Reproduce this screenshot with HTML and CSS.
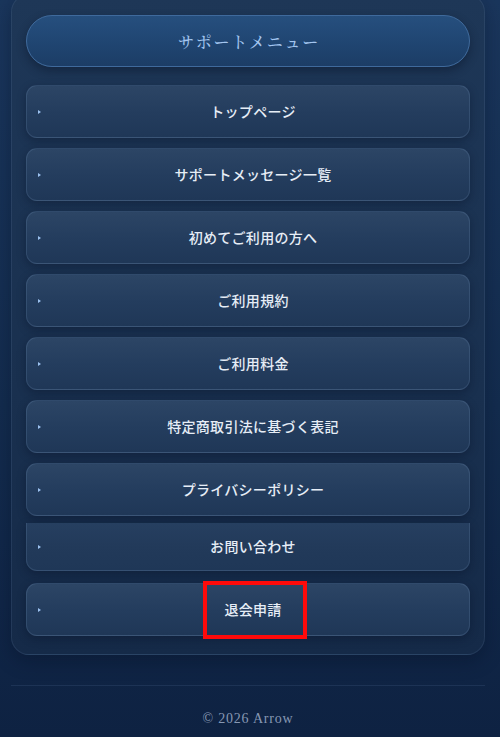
FILE: index.html
```html
<!DOCTYPE html>
<html lang="ja">
<head>
<meta charset="utf-8">
<title>サポートメニュー</title>
<link rel="stylesheet" href="styles.css">
</head>
<body>
<div class="page">
  <section class="card">
    <div class="pill">サポートメニュー</div>
    <nav class="menu">
      <a class="item" href="#"><span class="bullet"></span><span class="label">トップページ</span></a>
      <a class="item" href="#"><span class="bullet"></span><span class="label">サポートメッセージ一覧</span></a>
      <a class="item" href="#"><span class="bullet"></span><span class="label">初めてご利用の方へ</span></a>
      <a class="item" href="#"><span class="bullet"></span><span class="label">ご利用規約</span></a>
      <a class="item" href="#"><span class="bullet"></span><span class="label">ご利用料金</span></a>
      <a class="item" href="#"><span class="bullet"></span><span class="label">特定商取引法に基づく表記</span></a>
      <a class="item" href="#"><span class="bullet"></span><span class="label">プライバシーポリシー</span></a>
      <a class="item item-cut" href="#"><span class="bullet"></span><span class="label">お問い合わせ</span></a>
      <a class="item item-last" href="#"><span class="bullet"></span><span class="label">退会申請</span><span class="highlight"></span></a>
    </nav>
  </section>
  <footer class="footer">
    <div class="divider"></div>
    <p class="copy">© 2026 Arrow</p>
  </footer>
</div>
</body>
</html>
```
FILE: styles.css
```css
html, body {
  margin: 0;
  padding: 0;
}
body {
  background: linear-gradient(180deg, #1a365c 0%, #132c4e 55%, #0e2242 100%);
  min-height: 737px;
  font-family: "Noto Sans CJK JP", "Noto Sans", sans-serif;
  overflow: hidden;
}
.page {
  padding: 0 15px 0 11px;
  height: 737px;
  box-sizing: border-box;
}
.card {
  margin-top: -6px;
  padding: 20px 14px 18px;
  border-radius: 18px;
  background: linear-gradient(180deg, #1e3757 0%, #19304f 60%, #152a48 100%);
  border: 1px solid rgba(120, 150, 190, 0.14);
  box-shadow: 0 6px 18px rgba(5, 15, 35, 0.35);
}
.pill {
  height: 50px;
  border-radius: 26px;
  display: flex;
  align-items: center;
  justify-content: center;
  background: linear-gradient(180deg, #264f7e 0%, #1f4470 60%, #1c3d66 100%);
  border: 1px solid #3f6a9c;
  box-shadow: 0 4px 10px rgba(8, 20, 40, 0.45);
  color: #a3c5ef;
  font-family: "Noto Serif CJK JP", "Noto Sans CJK JP", serif;
  font-size: 16px;
  font-weight: 500;
  letter-spacing: 1.8px;
  padding-left: 2px;
}
.menu {
  margin-top: 18px;
  display: flex;
  flex-direction: column;
  gap: 10px;
}
.item {
  position: relative;
  height: 51px;
  display: flex;
  align-items: center;
  padding: 0 12px 0 11px;
  border-radius: 11px;
  background: linear-gradient(180deg, #2c4565 0%, #243d5e 50%, #1f3757 100%);
  border: 1px solid rgba(130, 160, 200, 0.18);
  box-shadow: 0 3px 8px rgba(5, 15, 35, 0.35);
  text-decoration: none;
}
.bullet {
  width: 0;
  height: 0;
  border-top: 2px solid transparent;
  border-bottom: 2px solid transparent;
  border-left: 3px solid #9cc2f0;
  margin-right: 8px;
  flex: none;
}
.label {
  flex: 1;
  text-align: center;
  color: #e6edf6;
  font-size: 14px;
  font-weight: 500;
  letter-spacing: 0.3px;
  margin-top: -2px;
}
.item-cut {
  margin-top: -3px;
  height: 47px;
  border-top: none;
  border-top-left-radius: 0;
  border-top-right-radius: 0;
  background: linear-gradient(180deg, #263f60 0%, #223a5a 50%, #1f3757 100%);
}
.item-last {
  margin-top: 2px;
}
.highlight {
  position: absolute;
  left: 176px;
  top: -3px;
  width: 96px;
  height: 50px;
  border: 4px solid #ff0a0a;
}
.footer {
  margin-top: 30px;
}
.divider {
  height: 1px;
  background: rgba(120, 150, 190, 0.14);
}
.copy {
  margin: 25px 0 0;
  text-align: center;
  color: #8798b3;
  font-family: "Liberation Serif", "DejaVu Serif", serif;
  font-size: 14px;
  letter-spacing: 0.8px;
}
```
